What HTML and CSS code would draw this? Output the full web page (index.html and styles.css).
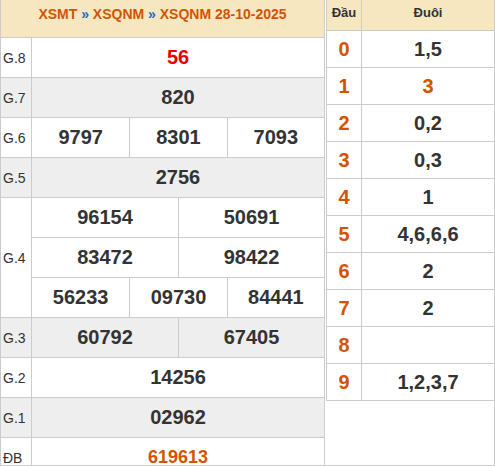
FILE: index.html
```html
<!DOCTYPE html>
<html lang="vi">
<head>
<meta charset="utf-8">
<title>XSQNM 28-10-2025</title>
<link rel="stylesheet" href="styles.css">
</head>
<body>
<div class="board">
  <div class="kq">
    <div class="kq-head">XSMT <span class="sep">»</span> XSQNM <span class="sep">»</span> XSQNM 28-10-2025</div>
    <div class="row"><div class="lbl">G.8</div><div class="nums c1"><span class="n red">56</span></div></div>
    <div class="row gray"><div class="lbl">G.7</div><div class="nums c1"><span class="n">820</span></div></div>
    <div class="row"><div class="lbl">G.6</div><div class="nums c3"><span class="n">9797</span><span class="n">8301</span><span class="n">7093</span></div></div>
    <div class="row gray"><div class="lbl">G.5</div><div class="nums c1"><span class="n">2756</span></div></div>
    <div class="row tall">
      <div class="lbl">G.4</div>
      <div class="stack">
        <div class="nums c2"><span class="n">96154</span><span class="n">50691</span></div>
        <div class="nums c2 sub"><span class="n">83472</span><span class="n">98422</span></div>
        <div class="nums c3 sub"><span class="n">56233</span><span class="n">09730</span><span class="n">84441</span></div>
      </div>
    </div>
    <div class="row gray"><div class="lbl">G.3</div><div class="nums c2"><span class="n">60792</span><span class="n">67405</span></div></div>
    <div class="row"><div class="lbl">G.2</div><div class="nums c1"><span class="n">14256</span></div></div>
    <div class="row gray"><div class="lbl">G.1</div><div class="nums c1"><span class="n">02962</span></div></div>
    <div class="row"><div class="lbl">ĐB</div><div class="nums c1"><span class="n db">619613</span></div></div>
  </div>
  <div class="loto">
    <div class="lt">
      <div class="lt-head"><div class="h1">Đầu</div><div class="h2">Đuôi</div></div>
      <div class="lt-row"><div class="d">0</div><div class="t">1,5</div></div>
      <div class="lt-row"><div class="d">1</div><div class="t hl">3</div></div>
      <div class="lt-row"><div class="d">2</div><div class="t">0,2</div></div>
      <div class="lt-row"><div class="d">3</div><div class="t">0,3</div></div>
      <div class="lt-row"><div class="d">4</div><div class="t">1</div></div>
      <div class="lt-row"><div class="d">5</div><div class="t">4,6,6,6</div></div>
      <div class="lt-row"><div class="d">6</div><div class="t">2</div></div>
      <div class="lt-row"><div class="d">7</div><div class="t">2</div></div>
      <div class="lt-row"><div class="d">8</div><div class="t"></div></div>
      <div class="lt-row"><div class="d">9</div><div class="t">1,2,3,7</div></div>
    </div>
  </div>
</div>
</body>
</html>
```

FILE: styles.css
```css
* { box-sizing: border-box; }
html, body { margin: 0; padding: 0; background: #fff; }
body { font-family: "Liberation Sans", Arial, sans-serif; color: #333; }

.board {
  width: 495px;
  height: 466px;
  border: 1px solid #ccc;
  border-top: none;
  overflow: hidden;
  display: flex;
  align-items: flex-start;
}

/* left result table */
.kq {
  width: 324px;
  flex: none;
  border-right: 1px solid #ccc;
}
.kq-head {
  height: 37px;
  background: #f6e7c1;
  color: #d35400;
  font-weight: bold;
  font-size: 14px;
  line-height: 20px;
  padding-top: 4px;
  text-align: center;
}
.kq-head .sep { color: #1a6fc4; }

.row {
  display: flex;
  height: 40px;
  border-top: 1px solid #ccc;
}
.row.tall { height: 120px; }
.row.gray { background: #eee; }

.lbl {
  width: 31px;
  flex: none;
  border-right: 1px solid #ccc;
  font-size: 14px;
  padding-left: 2px;
  display: flex;
  align-items: center;
}

.stack { flex: 1; display: flex; flex-direction: column; }
.stack .nums { height: 39px; flex: none; }
.stack .nums.sub { height: 40px; border-top: 1px solid #ccc; }

.nums { flex: 1; display: grid; }
.nums.c1 { grid-template-columns: 1fr; }
.nums.c2 { grid-template-columns: 1fr 1fr; }
.nums.c3 { grid-template-columns: 1fr 1fr 1fr; }

.n {
  display: flex;
  align-items: center;
  justify-content: center;
  font-weight: bold;
  font-size: 20px;
  color: #333;
}
.n + .n { border-left: 1px solid #ccc; }
.n.red { color: #e80000; }
.n.db { color: #d35400; font-size: 18px; }

/* right loto table */
.loto {
  flex: 1;
  padding-left: 1px;
}
.lt {
  border-left: 1px solid #ccc;
  border-bottom: 1px solid #ccc;
}
.lt-head {
  display: flex;
  height: 30px;
  background: #f6e7c1;
  font-weight: bold;
  font-size: 13px;
  line-height: 16px;
  padding-top: 5px;
}
.lt-head .h1 { width: 35px; flex: none; text-align: center; border-right: 1px solid #ccc; margin-top: -5px; padding-top: 5px; }
.lt-head .h2 { flex: 1; text-align: center; }

.lt-row {
  display: flex;
  height: 37px;
  border-top: 1px solid #ccc;
  font-weight: bold;
  font-size: 20px;
}
.lt-row .d {
  width: 35px;
  flex: none;
  border-right: 1px solid #ccc;
  color: #d35400;
  display: flex;
  align-items: center;
  justify-content: center;
}
.lt-row .t {
  flex: 1;
  display: flex;
  align-items: center;
  justify-content: center;
  color: #333;
}
.lt-row .t.hl { color: #d35400; }
```
